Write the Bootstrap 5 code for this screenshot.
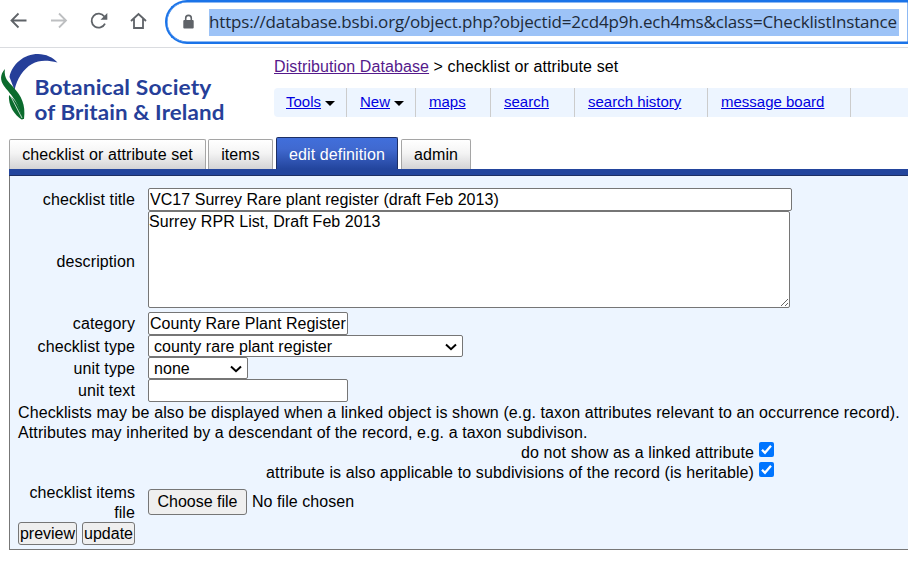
<!DOCTYPE html>
<html lang="en">
<head>
<meta charset="utf-8">
<meta name="viewport" content="width=device-width, initial-scale=1">
<title>Distribution Database</title>
<link href="https://cdn.jsdelivr.net/npm/bootstrap@5.3.0/dist/css/bootstrap.min.css" rel="stylesheet">
<style>
body{font:16px/20px "Liberation Sans",Arial,sans-serif;letter-spacing:.1px;color:#000;background:#fff;width:908px;height:562px}
.browser-bar{height:48px;border-bottom:1px solid #dadce0}
.bar-icons{width:165px;height:43px}
.address{height:44px;border:2px solid #1a73e8;border-right:0;border-radius:22px 0 0 22px;padding-left:15px;box-shadow:inset 0 0 0 .5px #1a73e8}
.address-url{background:#9dc3f7;color:#202b3a;height:27px;width:690px;margin-left:14px;font:17px/26px "Open Sans","Noto Sans",sans-serif;letter-spacing:-.175px}
.site-head{height:89px}
.logo-box{width:274px}
.crumbs{padding-top:9px;height:40px}
.crumbs a{color:#551a8b}
.menu-strip{height:29px;background:#edf5ff;border-radius:4px 0 0 4px;letter-spacing:0}
.menu-item{height:29px;border-right:1px solid #ccc;padding:0 0 1px 13px;font-size:15px;line-height:28px}
.menu-item a{color:#0000e0}
.w1{width:73px;padding-left:12px}.w2{width:69px}.w3{width:75px}.w4{width:84px}.w5{width:133px}.w6{width:143px}
.arrow-down{border:5px solid transparent;border-top:5.5px solid #000;border-bottom:0;margin-left:4px;margin-top:3px}
.tabs-row{height:32px;padding-left:9px}
.page-tab{height:30px;border:1px solid #a5a5a5;border-bottom:0;border-radius:2px 2px 0 0;background:linear-gradient(#fff,#f4f4f4 45%,#d3d3d5);text-align:center;line-height:29px;color:#000}
.t1{width:197px}.t2{width:65px;margin-left:2px}.t3{width:122px;margin-left:3px}.t4{width:70px;margin-left:3px}
.page-tab.current{height:32px;line-height:33px;color:#fff;border-color:#1d2f63;background:linear-gradient(#416fdb,#4069d0 35%,#23459d)}
.rule-bar{height:7px;margin-left:9px;background:#23459d;border-bottom:1px solid #1d2f63}
.form-panel{margin-left:9px;height:374px;background:#edf5ff;border-left:1px solid #777;border-bottom:1px solid #777;padding:12px 0 0 8px}
.lbl{width:117px;margin-right:13px;text-align:right;flex:none}
.lbl-pick{padding-top:2px}
.fld{font:16px/20px "Liberation Sans",Arial,sans-serif;letter-spacing:.04px;color:#000;border:1px solid #767676;border-radius:2px;background:#fff;padding:0 1px;display:block;height:23px}
.area{height:97px;width:642px;padding:0;resize:both}
.pick{height:22px;padding:1px 5px 0;line-height:21px}
.line{white-space:nowrap;height:20px}
.notes{padding-top:1px;height:80px;letter-spacing:.105px}
.opt{width:756px;text-align:right}
.tick{width:15px;height:15px;margin-left:5px;margin-top:-8px;background:#0075ff;border-radius:2px}
.push{font:16px/20px "Liberation Sans",Arial,sans-serif;color:#000;border:1px solid #767676;border-radius:3px;background:#efefef;padding:0;height:23px}
.file-row{height:40px}
.lbl-file{padding-top:2px}
.no-file{margin-left:5px;letter-spacing:.05px}
</style>
<script src="https://cdn.jsdelivr.net/npm/bootstrap@5.3.0/dist/js/bootstrap.bundle.min.js"></script>
</head>
<body class="overflow-hidden">
<div class="browser-bar d-flex">
  <svg class="bar-icons flex-shrink-0" viewBox="0 0 165 43" fill="none" stroke="#5f6368" stroke-width="1.8">
    <path d="M26.500 20.500H11.500M18.500 13.500L11.500 20.500L18.500 27.500"/>
    <path stroke="#bdbfc1" d="M51 20.500H66M59 13.500L66 20.500L59 27.500"/>
    <path d="M104.300 16.500A7 7 0 1 0 105 23.600"/>
    <path d="M107.300 13V19.800H100.500Z" fill="#5f6368" stroke="none"/>
    <path d="M131 21L138.500 14L146 21M134 19V28H143V19"/>
  </svg>
  <div class="address d-flex align-items-center flex-grow-1">
    <svg width="13" height="16" viewBox="0 0 13 16"><path d="M3.700 7V4.200a2.800 2.800 0 0 1 5.600 0V7" fill="none" stroke="#5f6368" stroke-width="1.600"/><rect x="1.300" y="6" width="10.400" height="8.500" rx="1" fill="#5f6368"/></svg>
    <div class="address-url flex-shrink-0 text-nowrap">https://database.bsbi.org/object.php?objectid=2cd4p9h.ech4ms&amp;class=ChecklistInstance</div>
  </div>
</div>

<header class="site-head d-flex">
  <div class="logo-box flex-shrink-0">
    <svg width="240" height="80" viewBox="0 48 240 80" class="d-block">
      <path d="M9.500 77C12 64 24 54 38 54C46 54 53 57.500 57.500 62.500C47 60 39 60 32 64C23 69 17 79 14.500 90Z" fill="#263f99"/>
      <path d="M4.800 69C0 75 0 80 4 86C9 93 19 101 22 119H24C26 104 21 96 14 88C8 81 4 79 4.800 69Z" fill="#0b6b2d"/>
      <path d="M9 95C8 105 14 115 22.500 120C21 110 17 101 9 95Z" fill="#0b6b2d"/>
      <path d="M9.500 94L22 118" stroke="#fff" stroke-width=".7"/>
      <g fill="#263f99" font-family="Lato,Open Sans,sans-serif" font-size="21.200" font-weight="700">
        <text x="34.500" y="94.500" textLength="177" lengthAdjust="spacingAndGlyphs">Botanical Society</text>
        <text x="34.500" y="120" textLength="190" lengthAdjust="spacingAndGlyphs">of Britain &amp; Ireland</text>
      </g>
    </svg>
  </div>
  <div class="flex-grow-1">
    <div class="crumbs"><a href="#">Distribution Database</a> &gt; checklist or attribute set</div>
    <nav class="menu-strip d-flex">
      <div class="menu-item w1 d-flex align-items-center"><a href="#">Tools</a><span class="arrow-down"></span></div>
      <div class="menu-item w2 d-flex align-items-center"><a href="#">New</a><span class="arrow-down"></span></div>
      <div class="menu-item w3"><a href="#">maps</a></div>
      <div class="menu-item w4"><a href="#">search</a></div>
      <div class="menu-item w5"><a href="#">search history</a></div>
      <div class="menu-item w6"><a href="#">message board</a></div>
    </nav>
  </div>
</header>

<div class="tabs-row d-flex align-items-end">
  <div class="page-tab t1">checklist or attribute set</div>
  <div class="page-tab t2">items</div>
  <div class="page-tab t3 current">edit definition</div>
  <div class="page-tab t4">admin</div>
</div>
<div class="rule-bar"></div>

<form class="form-panel">
  <div class="d-flex align-items-center"><label class="lbl">checklist title</label><input class="fld" style="width:644px" value="VC17 Surrey Rare plant register (draft Feb 2013)"></div>
  <div class="d-flex align-items-center mb-1"><label class="lbl pt-1">description</label><textarea class="fld area">Surrey RPR List, Draft Feb 2013</textarea></div>
  <div class="d-flex align-items-center"><label class="lbl">category</label><input class="fld" style="width:200px" value="County Rare Plant Register"></div>
  <div class="d-flex align-items-center"><label class="lbl lbl-pick">checklist type</label>
    <div class="fld pick d-flex align-items-center justify-content-between" style="width:315px"><span>county rare plant register</span><svg width="12" height="8" viewBox="0 0 12 8"><path d="M1 1.500L6 6.200L11 1.500" fill="none" stroke="#000" stroke-width="2"/></svg></div></div>
  <div class="d-flex align-items-center"><label class="lbl lbl-pick">unit type</label>
    <div class="fld pick d-flex align-items-center justify-content-between" style="width:100px"><span>none</span><svg width="12" height="8" viewBox="0 0 12 8"><path d="M1 1.500L6 6.200L11 1.500" fill="none" stroke="#000" stroke-width="2"/></svg></div></div>
  <div class="d-flex align-items-center"><label class="lbl">unit text</label><input class="fld" style="width:200px"></div>
  <div class="notes">
    <div class="line">Checklists may be also be displayed when a linked object is shown (e.g. taxon attributes relevant to an occurrence record).</div>
    <div class="line">Attributes may inherited by a descendant of the record, e.g. a taxon subdivison.</div>
    <div class="line opt d-flex justify-content-end align-items-center"><span>do not show as a linked attribute</span><svg class="tick" viewBox="0 0 15 15"><path d="M3 7.800L6 10.800L12 3.800" fill="none" stroke="#fff" stroke-width="2.300"/></svg></div>
    <div class="line opt d-flex justify-content-end align-items-center"><span>attribute is also applicable to subdivisions of the record (is heritable)</span><svg class="tick" viewBox="0 0 15 15"><path d="M3 7.800L6 10.800L12 3.800" fill="none" stroke="#fff" stroke-width="2.300"/></svg></div>
  </div>
  <div class="file-row d-flex align-items-center"><label class="lbl lbl-file">checklist items file</label><button type="button" class="push" style="width:99px;height:26px">Choose file</button><span class="no-file">No file chosen</span></div>
  <div class="d-flex"><button type="button" class="push" style="width:59px">preview</button><button type="button" class="push" style="width:53px;margin-left:5px">update</button></div>
</form>
</body>
</html>
